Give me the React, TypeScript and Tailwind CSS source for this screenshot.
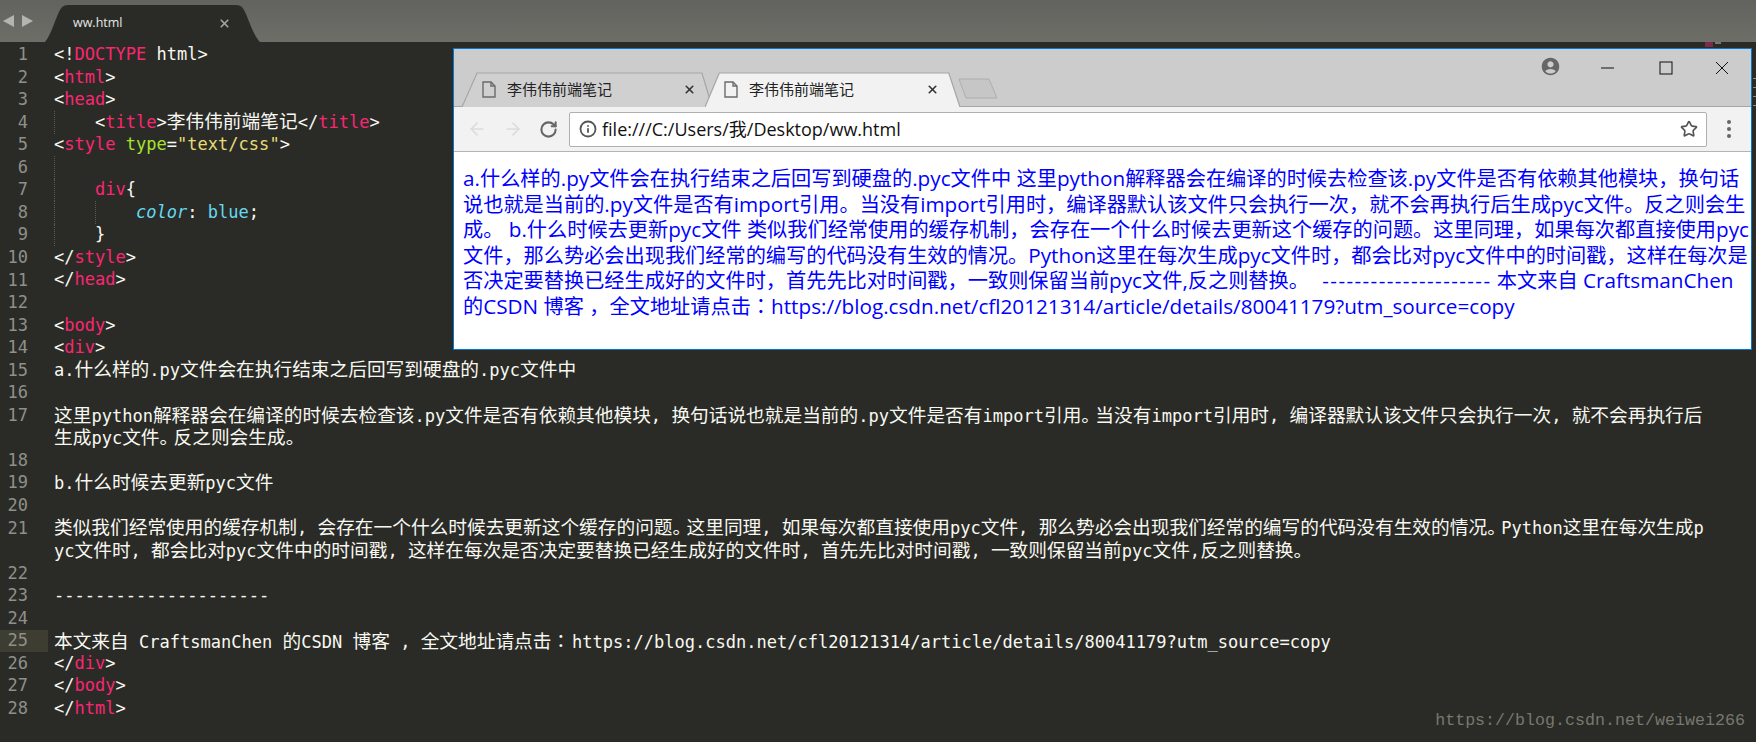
import React from 'react';
import { ArrowLeft, ArrowRight, RotateCw, Info, Star, X } from 'lucide-react';
import { MdAccountCircle } from 'react-icons/md';

const CODE_FONT = "font-['DejaVu_Sans_Mono','Noto_Sans_CJK_SC',monospace]";

type Seg = [string, string?];
type Row = { no?: number; guides?: number; segs: Seg[] };

const tag = 'text-[#f92672]';
const attr = 'text-[#a6e22e]';
const str = 'text-[#e6db74]';
const prop = 'text-[#66d9ef] italic';
const val = 'text-[#66d9ef]';

const rows: Row[] = [
  { no: 1, segs: [['<!'], ['DOCTYPE', tag], [' html>']] },
  { no: 2, segs: [['<'], ['html', tag], ['>']] },
  { no: 3, segs: [['<'], ['head', tag], ['>']] },
  { no: 4, guides: 1, segs: [['<'], ['title', tag], ['>李伟伟前端笔记</'], ['title', tag], ['>']] },
  { no: 5, segs: [['<'], ['style', tag], [' '], ['type', attr], ['='], ['"text/css"', str], ['>']] },
  { no: 6, guides: 1, segs: [] },
  { no: 7, guides: 1, segs: [['div', tag], ['{']] },
  { no: 8, guides: 2, segs: [['color', prop], [': '], ['blue', val], [';']] },
  { no: 9, guides: 1, segs: [['}']] },
  { no: 10, segs: [['</'], ['style', tag], ['>']] },
  { no: 11, segs: [['</'], ['head', tag], ['>']] },
  { no: 12, segs: [] },
  { no: 13, segs: [['<'], ['body', tag], ['>']] },
  { no: 14, segs: [['<'], ['div', tag], ['>']] },
  { no: 15, segs: [['a.什么样的.py文件会在执行结束之后回写到硬盘的.pyc文件中']] },
  { no: 16, segs: [] },
  { no: 17, segs: [['这里python解释器会在编译的时候去检查该.py文件是否有依赖其他模块, 换句话说也就是当前的.py文件是否有import引用。当没有import引用时, 编译器默认该文件只会执行一次, 就不会再执行后']] },
  { segs: [['生成pyc文件。反之则会生成。']] },
  { no: 18, segs: [] },
  { no: 19, segs: [['b.什么时候去更新pyc文件']] },
  { no: 20, segs: [] },
  { no: 21, segs: [['类似我们经常使用的缓存机制, 会存在一个什么时候去更新这个缓存的问题。这里同理, 如果每次都直接使用pyc文件, 那么势必会出现我们经常的编写的代码没有生效的情况。Python这里在每次生成p']] },
  { segs: [['yc文件时, 都会比对pyc文件中的时间戳, 这样在每次是否决定要替换已经生成好的文件时, 首先先比对时间戳, 一致则保留当前pyc文件,反之则替换。']] },
  { no: 22, segs: [] },
  { no: 23, segs: [['---------------------']] },
  { no: 24, segs: [] },
  { no: 25, segs: [['本文来自 CraftsmanChen 的CSDN 博客 , 全文地址请点击\uff1ahttps://blog.csdn.net/cfl20121314/article/details/80041179?utm_source=copy']] },
  { no: 26, segs: [['</'], ['div', tag], ['>']] },
  { no: 27, segs: [['</'], ['body', tag], ['>']] },
  { no: 28, segs: [['</'], ['html', tag], ['>']] },
];

const browserLines = [
  'a.什么样的.py文件会在执行结束之后回写到硬盘的.pyc文件中 这里python解释器会在编译的时候去检查该.py文件是否有依赖其他模块\uff0c换句话',
  '说也就是当前的.py文件是否有import引用。当没有import引用时\uff0c编译器默认该文件只会执行一次\uff0c就不会再执行后生成pyc文件。反之则会生',
  '成。 b.什么时候去更新pyc文件 类似我们经常使用的缓存机制\uff0c会存在一个什么时候去更新这个缓存的问题。这里同理\uff0c如果每次都直接使用pyc',
  '文件\uff0c那么势必会出现我们经常的编写的代码没有生效的情况。Python这里在每次生成pyc文件时\uff0c都会比对pyc文件中的时间戳\uff0c这样在每次是',
  '否决定要替换已经生成好的文件时\uff0c首先先比对时间戳\uff0c一致则保留当前pyc文件,反之则替换。 --------------------- 本文来自 CraftsmanChen',
  '的CSDN 博客 \uff0c全文地址请点击\uff1ahttps://blog.csdn.net/cfl20121314/article/details/80041179?utm_source=copy',
];

// Sublime draws CJK larger than the latin cell, the full stop and colon get their own widths
const CodeText: React.FC<{ text: string }> = ({ text }) => (
  <>
    {text.split(/(。|\uff1a|[\u4e00-\u9fff]+)/).filter(Boolean).map((part, i) =>
      part === '。' ? (
        <span key={i} className="text-[18.7px] tracking-[-4.7px]">{part}</span>
      ) : part === '\uff1a' ? (
        <span key={i} className="text-[18.7px] tracking-[1.7px] font-['Noto_Sans_CJK_KR',sans-serif]">{part}</span>
      ) : /[\u4e00-\u9fff]/.test(part) ? (
        <span key={i} className="text-[18.7px]">{part}</span>
      ) : (
        <span key={i}>{part}</span>
      ),
    )}
  </>
);

// comma and colon sit centred in their cell in the page text, so they take the KR face
const PageLine: React.FC<{ text: string }> = ({ text }) => (
  <div className="h-[25.6px] [text-spacing-trim:space-all]">
    {text.split(/(\uff0c|\uff1a|-{2,}|[\u3001-\u9fff]+)/).filter(Boolean).map((part, i) =>
      part === '\uff0c' || part === '\uff1a' ? (
        <span key={i} className="text-[20.2px] font-['Noto_Sans_CJK_KR',sans-serif]">{part}</span>
      ) : /[\u3001-\u9fff]/.test(part) ? (
        <span key={i} className="text-[20.2px]">{part}</span>
      ) : part.startsWith('--') ? (
        <span key={i} className="ml-[8px] text-[20.7px] tracking-[1.4px]">{part}</span>
      ) : (
        <span key={i} className="text-[20.7px]">{part}</span>
      ),
    )}
  </div>
);

const EditorRow: React.FC<{ row: Row }> = ({ row }) => (
  <div className="flex h-[22.55px] items-center">
    <div
      className={`w-[48px] h-full shrink-0 pr-[20px] flex items-center justify-end text-[17px] text-[#8f908a] ${
        row.no === 25 ? 'bg-[#3e3d32]' : ''
      }`}
    >
      {row.no}
    </div>
    <div className="flex h-full items-center pl-[6px] whitespace-pre text-[#f8f8f2]">
      {Array.from({ length: row.guides ?? 0 }).map((_, i) => (
        <span key={i} className="h-full w-[41px] shrink-0 border-l border-dotted border-[#5a5a55]" />
      ))}
      <span>
        {row.segs.map(([text, color], i) => (
          <span key={i} className={color}>
            <CodeText text={text} />
          </span>
        ))}
      </span>
    </div>
  </div>
);

const DocIcon = () => (
  <svg width="14" height="17" viewBox="0 0 14 17" fill="none" stroke="#6b6b6b" strokeWidth="1.4" className="shrink-0">
    <path d="M1 1h8l4 4v11H1z" />
    <path d="M9 1v4h4" />
  </svg>
);

const ChromeTab: React.FC<{ active?: boolean; shape: string; className: string }> = ({ active, shape, className }) => (
  <div className={`relative h-[35px] flex items-center ${className}`}>
    <svg className="absolute inset-0 w-full h-full" viewBox="0 0 250 35" preserveAspectRatio="none">
      <path d={shape} fill={active ? '#f2f2f2' : '#d0d0d0'} stroke="#a6a6a6" strokeWidth="1.2" />
    </svg>
    <div className="relative flex items-center w-full">
      <DocIcon />
      <span className="ml-[11px] text-[15px] text-[#222] font-['Noto_Sans_CJK_SC',sans-serif]">李伟伟前端笔记</span>
      <X size={13} strokeWidth={3} className="ml-auto text-[#333]" />
    </div>
  </div>
);

const BrowserWindow = () => (
  <div className="absolute left-[453px] top-[48px] w-[1299px] h-[302px] border border-[#0078d7] bg-white flex flex-col font-['Noto_Sans_CJK_SC',sans-serif]">
    {/* title bar + tabs */}
    <div className="h-[58px] bg-[#cccccc] border-b border-[#a6a6a6] relative flex items-end pl-[8px]">
      <ChromeTab shape="M0 35 L15 1 L240 1 L250 35" className="w-[250px] pl-[20px] pr-[16px] -mb-px" />
      <ChromeTab active shape="M0 35 L14 1 L239 1 L250 35" className="w-[255px] -ml-[7px] pl-[19px] pr-[21px] -mb-px" />
      <svg width="42" height="22" viewBox="0 0 42 22" className="ml-[-3px] mb-[6px]" fill="#c6c6c6" stroke="#aeaeae">
        <path d="M2 1h30l8 19H9z" />
      </svg>
      {/* window controls */}
      <div className="absolute right-0 top-0 flex items-start h-[32px]">
        <MdAccountCircle size={21} className="text-[#666] mt-[7px] mr-[40px]" />
        <svg width="14" height="14" viewBox="0 0 14 14" className="mt-[12px] mr-[44px]"><path d="M0 7h13" stroke="#111" strokeWidth="1" /></svg>
        <svg width="14" height="14" viewBox="0 0 14 14" className="mt-[12px] mr-[42px]"><rect x="1" y="1" width="12" height="12" fill="none" stroke="#111" /></svg>
        <svg width="14" height="14" viewBox="0 0 14 14" className="mt-[12px] mr-[22px]"><path d="M1 1l12 12M13 1L1 13" stroke="#111" /></svg>
      </div>
    </div>
    {/* toolbar */}
    <div className="h-[45px] bg-[#f2f2f2] border-b border-[#b4b4b4] flex items-center pl-[13px] pr-[13px]">
      <ArrowLeft size={20} className="text-[#dcdcdc]" />
      <ArrowRight size={20} className="ml-[16px] text-[#dcdcdc]" />
      <RotateCw size={19} strokeWidth={2.6} className="ml-[16px] text-[#666]" />
      <div className="ml-[11px] w-[1138px] h-[35px] bg-white border border-[#b0b0b0] rounded-[2px] flex items-center pl-[9px] pr-[8px]">
        <Info size={18} strokeWidth={2.4} className="text-[#555]" />
        <span className="ml-[5px] text-[18px] text-[#111] font-['Open_Sans','Noto_Sans_CJK_SC',sans-serif]">file:///C:/Users/我/Desktop/ww.html</span>
        <Star size={18} strokeWidth={2.2} className="ml-auto text-[#555]" />
      </div>
      <div className="ml-[20px] flex flex-col gap-[3px]">
        <span className="w-[4px] h-[4px] rounded-full bg-[#666]" />
        <span className="w-[4px] h-[4px] rounded-full bg-[#666]" />
        <span className="w-[4px] h-[4px] rounded-full bg-[#666]" />
      </div>
    </div>
    {/* page */}
    <div className="pt-[13px] pl-[9px] leading-[25.6px] text-[#0000ff] whitespace-pre font-['Open_Sans','Noto_Sans_CJK_SC',sans-serif]">
      {browserLines.map((line, i) => (
        <PageLine key={i} text={line} />
      ))}
    </div>
  </div>
);

export default function App() {
  return (
    <div className="relative w-[1756px] h-[742px] overflow-hidden bg-[#2a2b26] flex flex-col">
      {/* tab bar */}
      <div className="h-[42px] shrink-0 bg-gradient-to-b from-[#62625e] to-[#6e6e69] flex items-end">
        <div className="w-[45px] h-full flex items-center gap-[8px] pl-[3px]">
          <svg width="11" height="12" viewBox="0 0 11 12"><path d="M11 0v12L0 6z" fill="#b4b4b0" /></svg>
          <svg width="11" height="12" viewBox="0 0 11 12"><path d="M0 0v12l11-6z" fill="#b4b4b0" /></svg>
        </div>
        <div className="relative w-[215px] h-[37px]">
          <svg className="absolute inset-0" width="215" height="37" viewBox="0 0 215 37">
            <path d="M0 37 C6 30 11 12 15 5 C17 1 20 0 24 0 H190 C194 0 197 1 199 5 C203 12 208 30 215 37 Z" fill="#2a2b26" />
          </svg>
          <div className="relative flex items-center h-full pl-[28px] pr-[29px]">
            <span className="text-[12.5px] text-[#e6e6e6] font-['Open_Sans',sans-serif] font-medium">ww.html</span>
            <X size={13} strokeWidth={3.2} className="ml-auto text-[#a2a29e]" />
          </div>
        </div>
      </div>
      {/* editor */}
      <div className={`flex-1 pt-[1.5px] text-[17.05px] ${CODE_FONT}`}>
        {rows.map((row, i) => (
          <EditorRow key={i} row={row} />
        ))}
      </div>
      <BrowserWindow />
      {/* minimap marks peeking out around the browser window */}
      <div className="absolute left-[1705px] top-[42px] flex gap-[2px]">
        <span className="w-[8px] h-[5px] bg-[#7a2a4a]" />
        <span className="w-[6px] h-[2px] bg-[#77776f]" />
      </div>
      <div className="absolute left-[1753px] top-[78px] w-[3px] flex flex-col gap-[8px]">
        <span className="h-[1px] bg-[#8a8a84]" />
        <span className="h-[1px] bg-[#8a8a84]" />
        <span className="h-[1px] bg-[#8a8a84]" />
        <span className="h-[1px] bg-[#8a8a84]" />
      </div>
      {/* blog watermark */}
      <div className="absolute right-[11px] bottom-[9px] text-[16.67px] text-[#77776f] font-['Liberation_Mono',monospace]">
        https://blog.csdn.net/weiwei266
      </div>
    </div>
  );
}
